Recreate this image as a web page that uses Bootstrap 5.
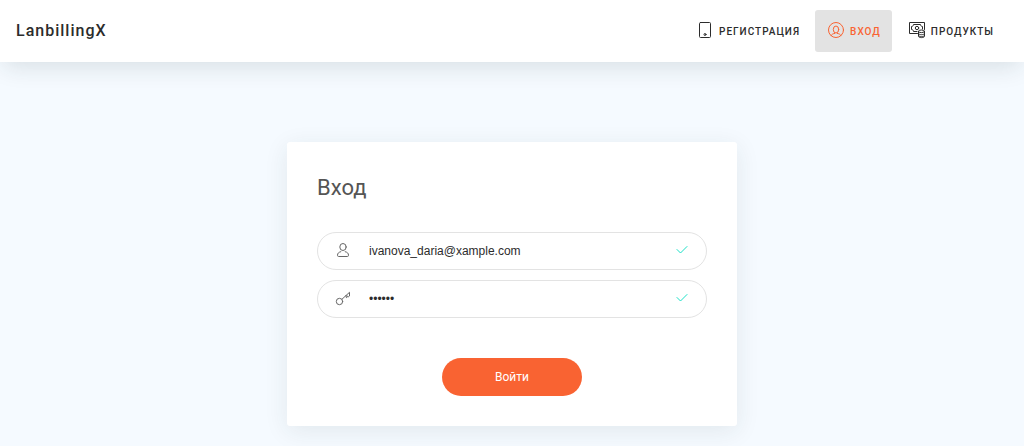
<!DOCTYPE html>
<html lang="ru">
<head>
<meta charset="utf-8">
<meta name="viewport" content="width=device-width, initial-scale=1">
<title>LanbillingX – Вход</title>
<link href="https://cdn.jsdelivr.net/npm/bootstrap@5.3.0/dist/css/bootstrap.min.css" rel="stylesheet">
<style>
  body { background: #f5faff; font-family: Roboto, "Liberation Sans", sans-serif; color: #2c2c2c; }
  .topbar { background: #fff; min-height: 62px; box-shadow: 0 8px 24px -4px rgba(30, 50, 50, .14); }
  .topbar .navbar-brand { font-size: 16px; font-weight: 500; letter-spacing: 1px; color: #2c2c2c; }
  .topbar .container-fluid { padding: 0 19px 0 16px; }
  .topbar .nav-link { gap: 5px; height: 42px; padding: 0 11px 0 12px; font-size: 10px; font-weight: 500; letter-spacing: 1px; text-transform: uppercase; color: #2c2c2c; border-radius: 3px; }
  .topbar .nav-link.active { background: #e3e3e3; color: #f96332; }
  .topbar .nav-gap { gap: 4px; }
  .topbar .line-icon { margin-bottom: 2px; }
  .line-icon { fill: none; stroke: currentColor; stroke-width: 1; stroke-linecap: round; stroke-linejoin: round; flex: none; }
  .login-card { max-width: 450px; margin: 80px auto 20px; padding: 30px; border: 0; border-radius: 3px; box-shadow: 0 5px 25px rgba(30, 50, 50, .09); }
  .login-card h1 { font-size: 22px; font-weight: 400; line-height: 32px; margin-bottom: 28px; color: #555; }
  .field { height: 38px; border: 1px solid #e3e3e3; border-radius: 30px; padding: 0 17px; color: #666; }
  .field + .field { margin-top: 10px; }
  .field .form-control { height: 36px; padding: 0 0 0 18px; border: 0; background: none; box-shadow: none; font-family: "Liberation Sans", Arial, sans-serif; font-size: 12px; color: #2c2c2c; }
  .field .line-icon { margin-bottom: 2px; }
  .field .valid-icon { color: #1be1c7; }
  .btn-enter { width: 140px; height: 38px; margin-top: 40px; padding: 0; border: 0; border-radius: 30px; background: #f96332; color: #fff; font-size: 12px; }
  .btn-enter:hover { background: #fa7a50; color: #fff; }
</style>
</head>
<body>
<header>
  <nav class="navbar topbar p-0">
    <div class="container-fluid flex-nowrap">
      <a class="navbar-brand m-0 p-0" href="#">LanbillingX</a>
      <ul class="nav nav-gap flex-nowrap">
        <li class="nav-item">
          <a class="nav-link d-flex align-items-center" href="#">
            <svg class="line-icon" width="18" height="18" viewBox="0 0 18 18" aria-hidden="true"><rect x="3.500" y="1.500" width="11" height="15" rx="1"/><circle cx="9" cy="13.500" r="1"/></svg>
            <span>Регистрация</span>
          </a>
        </li>
        <li class="nav-item">
          <a class="nav-link active d-flex align-items-center" aria-current="page" href="#">
            <svg class="line-icon" width="18" height="18" viewBox="0 0 18 18" aria-hidden="true"><circle cx="9" cy="9" r="7.500"/><ellipse cx="9" cy="8.500" rx="2.700" ry="3.500"/><path d="M4 14.700c.8-1.600 2-2 3.700-2.300M14 14.700c-.8-1.600-2-2-3.700-2.300"/></svg>
            <span>Вход</span>
          </a>
        </li>
        <li class="nav-item">
          <a class="nav-link d-flex align-items-center" href="#">
            <svg class="line-icon" width="18" height="18" viewBox="0 0 18 18" aria-hidden="true"><path d="M9.500 12.500h-8v-11h15v7M9 10.500H5.500c0-1.200-.8-2-2-2v-3c1.200 0 2-.8 2-2h7c0 1.200.8 2 2 2v2.500"/><circle cx="9" cy="7" r="1.700"/><ellipse cx="13.500" cy="10.300" rx="3" ry="1.300"/><path d="M10.500 10.300v5c0 .8 1.300 1.300 3 1.300s3-.5 3-1.300v-5M10.500 12.500c0 .7 1.300 1.200 3 1.200s3-.5 3-1.200M10.500 14.500c0 .7 1.300 1.100 3 1.100s3-.4 3-1.100"/></svg>
            <span>Продукты</span>
          </a>
        </li>
      </ul>
    </div>
  </nav>
</header>
<main class="container-fluid">
  <form class="card login-card">
    <h1>Вход</h1>
    <div class="field d-flex align-items-center">
      <label class="d-flex" for="email" aria-label="Эл. почта">
        <svg class="line-icon" width="16" height="16" viewBox="0 0 16 16" aria-hidden="true"><ellipse cx="8" cy="5" rx="3.200" ry="3.500"/><path d="M5.800 9.700c-2 .4-3.300 1.500-3.300 3.600 0 .8.400 1.200 1.100 1.200h8.800c.7 0 1.100-.4 1.100-1.200 0-2.100-1.300-3.200-3.300-3.600"/></svg>
      </label>
      <input class="form-control" id="email" type="email" value="ivanova_daria@xample.com">
      <svg class="line-icon valid-icon" width="14" height="14" viewBox="0 0 14 14" aria-hidden="true"><path d="M2 6.500l3.500 3.500L12 3.500"/></svg>
    </div>
    <div class="field d-flex align-items-center">
      <label class="d-flex" for="password" aria-label="Пароль">
        <svg class="line-icon" width="16" height="16" viewBox="0 0 16 16" aria-hidden="true"><circle cx="4.500" cy="11.500" r="3.200"/><path d="M7 9.200l7.500-6.900v3.700l-1.200 1-1-1.200M11 5.500l.4 2.200 1-.8"/></svg>
      </label>
      <input class="form-control" id="password" type="password" value="secret">
      <svg class="line-icon valid-icon" width="14" height="14" viewBox="0 0 14 14" aria-hidden="true"><path d="M2 6.500l3.500 3.500L12 3.500"/></svg>
    </div>
    <button class="btn btn-enter mx-auto" type="submit">Войти</button>
  </form>
</main>
<script src="https://cdn.jsdelivr.net/npm/bootstrap@5.3.0/dist/js/bootstrap.bundle.min.js"></script>
</body>
</html>
